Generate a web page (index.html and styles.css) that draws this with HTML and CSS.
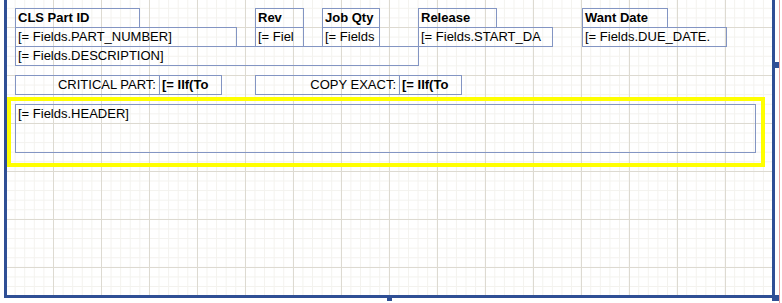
FILE: index.html
```html
<!DOCTYPE html>
<html>
  <head>
    <title>Report Designer</title>
    <meta charset="utf-8" />
    <link rel="stylesheet" href="styles.css">
  </head>
  <body>
    <div class="page">
      <div class="surface">
        <div class="band">
          <div class="tb bold part-id">CLS Part ID</div>
          <div class="tb part-number">[= Fields.PART_NUMBER]</div>
          <div class="tb description">[= Fields.DESCRIPTION]</div>

          <div class="tb bold rev-label">Rev</div>
          <div class="tb rev-value">[= Fiel</div>

          <div class="tb bold qty-label">Job Qty</div>
          <div class="tb qty-value">[= Fields</div>

          <div class="tb bold release-label">Release</div>
          <div class="tb release-value">[= Fields.START_DA</div>

          <div class="tb bold want-label">Want Date</div>
          <div class="tb want-value">[= Fields.DUE_DATE.</div>

          <div class="tb right critical-label">CRITICAL PART:</div>
          <div class="tb bold critical-value">[= IIf(To</div>

          <div class="tb right copy-label">COPY EXACT:</div>
          <div class="tb bold copy-value">[= IIf(To</div>

          <div class="selection"></div>
          <div class="tb header-box">[= Fields.HEADER]</div>
        </div>

        <span class="handle handle-right"></span>
        <span class="handle handle-bottom"></span>
        <span class="handle handle-corner"></span>
      </div>
    </div>
  </body>
</html>
```

FILE: styles.css
```css
body {
  margin: 0;
  width: 782px;
  height: 303px;
  overflow: hidden;
  background-color: #fff;
  font-family: "Liberation Sans", Arial, sans-serif;
  color: #000;
}

.page {
  width: 780px;
  height: 303px;
  box-sizing: border-box;
  border-right: 1px solid #e8a3a3;
}

.surface {
  position: relative;
  width: 765px;
  height: 295px;
  margin-left: 4px;
  border-left: 3px solid #2f4f95;
  border-right: 3px solid #2f4f95;
  border-bottom: 3px solid #2f4f95;
  background-color: #fff;
  background-image:
    linear-gradient(to right, #dddad1 1px, transparent 1px),
    linear-gradient(to bottom, #dddad1 1px, transparent 1px),
    linear-gradient(to right, #f3f2ee 1px, transparent 1px),
    linear-gradient(to bottom, #f3f2ee 1px, transparent 1px);
  background-size: 48px 48px, 48px 48px, 9.6px 9.6px, 9.6px 9.6px;
  background-position: 46px 27px;
}

.band {
  position: relative;
  height: 100%;
}

/* report items sit on the design canvas at their own location */
.tb {
  position: absolute;
  box-sizing: border-box;
  height: 20px;
  padding: 0 2px;
  border: 1px solid #8395c3;
  font-size: 13px;
  line-height: 17px;
  white-space: nowrap;
  overflow: hidden;
}

.bold {
  font-weight: bold;
}

.right {
  text-align: right;
  padding-right: 3px;
}

.part-id { left: 8px; top: 8px; width: 125px; }
.part-number { left: 8px; top: 27px; width: 222px; }
.description { left: 8px; top: 46px; width: 404px; }

.rev-label { left: 248px; top: 8px; width: 49px; }
.rev-value { left: 248px; top: 27px; width: 49px; }

.qty-label { left: 315px; top: 8px; width: 58px; }
.qty-value { left: 315px; top: 27px; width: 58px; }

.release-label { left: 411px; top: 8px; width: 79px; }
.release-value { left: 411px; top: 27px; width: 135px; }

.want-label { left: 575px; top: 8px; width: 86px; }
.want-value { left: 575px; top: 27px; width: 145px; }

.critical-label { left: 8px; top: 75px; width: 145px; }
.critical-value { left: 152px; top: 75px; width: 63px; }

.copy-label { left: 248px; top: 75px; width: 145px; }
.copy-value { left: 392px; top: 75px; width: 63px; }

.selection {
  position: absolute;
  left: 0;
  top: 97px;
  width: 758px;
  height: 70px;
  box-sizing: border-box;
  border: 4px solid #ffff00;
}

.header-box {
  left: 8px;
  top: 104px;
  width: 741px;
  height: 49px;
}

.handle {
  position: absolute;
  background-color: #2f4f95;
}

.handle-right {
  left: 765px;
  top: 62px;
  width: 7px;
  height: 6px;
}

.handle-bottom {
  left: 380px;
  top: 295px;
  width: 5px;
  height: 6px;
}

.handle-corner {
  left: 765px;
  top: 295px;
  width: 7px;
  height: 6px;
}
```
